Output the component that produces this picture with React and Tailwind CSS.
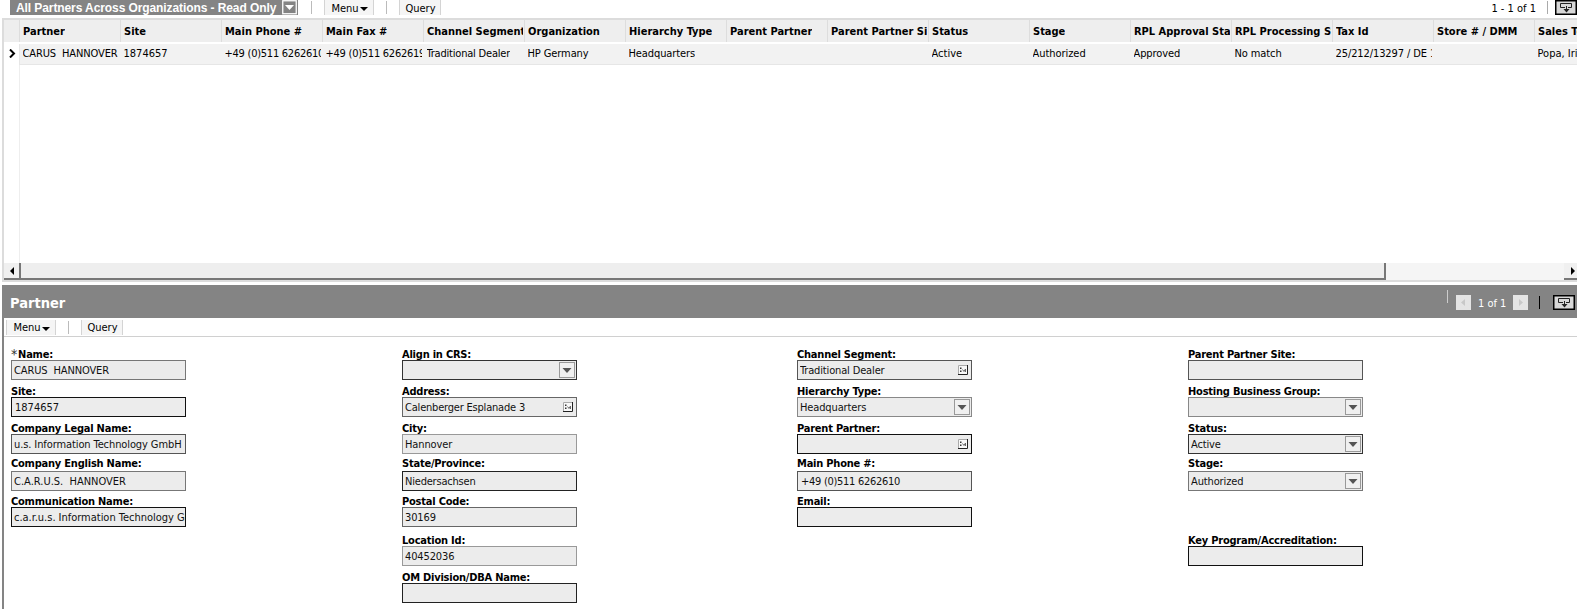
import React from "react";

const COLUMNS = [
  ["Partner", "CARUS  HANNOVER", "tracking-[-0.12px]"],
  ["Site", "1874657", ""],
  ["Main Phone #", "+49 (0)511 6262610", "tracking-[-0.25px]"],
  ["Main Fax #", "+49 (0)511 6262619", "tracking-[-0.25px]"],
  ["Channel Segment", "Traditional Dealer", "tracking-[-0.2px]"],
  ["Organization", "HP Germany", "tracking-[-0.1px]"],
  ["Hierarchy Type", "Headquarters", "tracking-[-0.1px]"],
  ["Parent Partner", "", ""],
  ["Parent Partner Site", "", ""],
  ["Status", "Active", ""],
  ["Stage", "Authorized", "tracking-[-0.05px]"],
  ["RPL Approval Status", "Approved", "tracking-[-0.1px]"],
  ["RPL Processing Status", "No match", "tracking-[-0.1px]"],
  ["Tax Id", "25/212/13297 / DE 1", "tracking-[-0.1px]"],
  ["Store # / DMM", "", ""],
  ["Sales Team", "Popa, Irina", ""],
];

const FIELD_COLUMNS = [
  [
    { label: "Name:", value: "CARUS  HANNOVER", border: "border-[#777]", required: true },
    { label: "Site:", value: "1874657", border: "border-[#111]", pad: "pl-[3px]", tracking: "" },
    { label: "Company Legal Name:", value: "u.s. Information Technology GmbH", border: "border-[#555]", tracking: "tracking-[-0.1px]" },
    { label: "Company English Name:", value: "C.A.R.U.S.  HANNOVER", border: "border-[#777]", raised: true, tracking: "" },
    { label: "Communication Name:", value: "c.a.r.u.s. Information Technology GmbH", border: "border-[#111]", tracking: "tracking-[-0.02px]" },
  ],
  [
    { label: "Align in CRS:", value: "", border: "border-[#333]", kind: "select" },
    { label: "Address:", value: "Calenberger Esplanade 3", border: "border-[#666]", kind: "pick", tracking: "tracking-[-0.2px]" },
    { label: "City:", value: "Hannover", border: "border-[#999]" },
    { label: "State/Province:", value: "Niedersachsen", border: "border-[#222]", tracking: "tracking-[-0.2px]", raised: true },
    { label: "Postal Code:", value: "30169", border: "border-[#666]" },
    { label: "Location Id:", value: "40452036", border: "border-[#999]" },
    { label: "OM Division/DBA Name:", value: "", border: "border-[#222]" },
  ],
  [
    { label: "Channel Segment:", value: "Traditional Dealer", border: "border-[#555]", kind: "pick", tracking: "tracking-[-0.15px]" },
    { label: "Hierarchy Type:", value: "Headquarters", border: "border-[#888]", kind: "select" },
    { label: "Parent Partner:", value: "", border: "border-[#111]", kind: "pick" },
    { label: "Main Phone #:", value: "+49 (0)511 6262610", border: "border-[#555]", pad: "pl-[3px]", tracking: "tracking-[-0.28px]", raised: true },
    { label: "Email:", value: "", border: "border-[#111]" },
  ],
  [
    { label: "Parent Partner Site:", value: "", border: "border-[#555]" },
    { label: "Hosting Business Group:", value: "", border: "border-[#888]", kind: "select" },
    { label: "Status:", value: "Active", border: "border-[#333]", kind: "select" },
    { label: "Stage:", value: "Authorized", border: "border-[#777]", kind: "select", raised: true },
    null,
    { label: "Key Program/Accreditation:", value: "", border: "border-[#111]" },
  ],
];

function ToolButton({ children, className = "" }) {
  return (
    <div className={`flex shrink-0 items-center justify-center border-x border-[#d4d4d4] bg-[#f5f5f5] pl-[1px] pt-[2px] ${className}`}>
      {children}
    </div>
  );
}

function Caret() {
  return (
    <svg width="8" height="4" viewBox="0 0 8 4" className="ml-[1px] mt-[1px]">
      <path d="M0 0H8L4 4Z" fill="#000" />
    </svg>
  );
}

function ExpandIcon() {
  return (
    <svg width="22" height="15" viewBox="0 0 22 15" className="shrink-0">
      <rect x="0.75" y="0.75" width="20.5" height="13.5" fill="#d8d8d8" stroke="#000" strokeWidth="1.5" />
      <path d="M10 7.5H5.5V3.5H16.5V7.5H13M11.5 6V11" fill="none" stroke="#222" />
      <path d="M8.5 9H14.5L11.5 12.5Z" fill="#222" />
    </svg>
  );
}

function SelectButton() {
  return (
    <div className="mr-[1px] flex h-4 w-4 shrink-0 items-center justify-center border border-[#999] bg-[#f0f0f0]">
      <svg width="10" height="5" viewBox="0 0 10 5">
        <path d="M0.5 0H9.5L5 5Z" fill="#555" />
      </svg>
    </div>
  );
}

function PickIcon() {
  return (
    <svg width="10" height="10" viewBox="0 0 10 10" className="mr-[3px] shrink-0">
      <rect x="0" y="0" width="10" height="10" fill="#f8f8f8" />
      <path d="M0.5 9V0.5H9" fill="none" stroke="#aaa" />
      <path d="M0 9.5H9.5V0" fill="none" stroke="#222" />
      <path d="M2 2.5H3.5V4H2ZM2 5.5H3.5V7H2Z" fill="#333" />
      <path d="M4.5 4.5L6 6.5L7.5 4V7" fill="none" stroke="#666" />
    </svg>
  );
}

function PageButton({ flip }) {
  return (
    <svg width="15" height="15" viewBox="0 0 15 15" className="shrink-0">
      <rect width="15" height="15" fill="#e4e4e4" />
      <path d={flip ? "M6 4L10 7.5L6 11Z" : "M9 4L5 7.5L9 11Z"} fill="#c8c8c8" />
    </svg>
  );
}

function Field({ field }) {
  if (!field) return <div />;
  const { label, value, border, required, raised, kind, pad = "pl-[2px]", tracking = "tracking-[-0.13px]" } = field;
  return (
    <div className="flex flex-col">
      <div className={`flex h-[17px] shrink-0 items-end whitespace-nowrap font-bold leading-[11px] tracking-[-0.22px] ${raised ? "pb-[2px]" : ""}`}>
        {required && <span className="mr-[1px] text-[14px] font-normal text-[#333]">*</span>}
        {label}
      </div>
      <div className={`flex h-5 w-[175px] shrink-0 items-center border bg-[#ececec] ${border} ${pad}`}>
        <span className={`min-w-0 flex-1 overflow-hidden whitespace-pre pt-[2px] text-[#111] ${tracking}`}>{value}</span>
        {kind === "select" && <SelectButton />}
        {kind === "pick" && <PickIcon />}
      </div>
    </div>
  );
}

export default function App() {
  return (
    <div className="flex h-[609px] w-[1577px] flex-col overflow-hidden bg-white font-['DejaVu_Sans_Condensed','DejaVu_Sans',sans-serif] text-[11px] leading-[14px] text-black [font-stretch:condensed]">
      <div className="flex h-[18px] items-start">
        <div className="ml-[10px] flex h-[15px] w-[288px] shrink-0 items-center justify-between whitespace-nowrap bg-[#848484] pl-[6px] font-['Liberation_Sans',Arial,sans-serif] text-[12px] font-bold tracking-[-0.09px] text-white">
          <span>All Partners Across Organizations - Read Only</span>
          <svg width="16" height="15" viewBox="0 0 16 15" className="shrink-0">
            <rect x="0.75" y="0.75" width="13.5" height="13" fill="none" stroke="#fff" strokeWidth="1.3" />
            <path d="M3 5H12L7.5 10Z" fill="#fff" />
          </svg>
        </div>
        <div className="ml-[13px] mt-[1px] h-[13px] w-px bg-[#bbb]" />
        <ToolButton className="ml-[12px] h-[15px] w-[50px]">Menu<Caret /></ToolButton>
        <div className="ml-[12px] mt-[1px] h-[13px] w-px bg-[#bbb]" />
        <ToolButton className="ml-[12px] h-[15px] w-[42px]">Query</ToolButton>
        <div className="ml-auto mt-[2px]">1 - 1 of 1</div>
        <div className="ml-[11px] mt-[1px] h-[13px] w-px bg-[#aaa]" />
        <div className="ml-[7px]"><ExpandIcon /></div>
      </div>

      <div className="ml-[2px] flex h-[264px] flex-col border-b-2 border-l-2 border-t-2 border-[#dcdcdc]">
        <div className="flex h-[22px] w-[1700px] bg-[#eee]">
          <div className="h-full w-4 shrink-0 border-r border-[#ddd]" />
          {COLUMNS.map(([head]) => (
            <div key={head} className="flex w-[101px] shrink-0 items-center border-r border-[#ddd] pl-[3px] pr-[1px] pt-[2px] font-bold">
              <span className="overflow-hidden whitespace-nowrap">{head}</span>
            </div>
          ))}
        </div>
        <div className="h-[2px] shrink-0" />
        <div className="flex h-[21px] w-[1700px] shrink-0">
          <div className="flex w-4 shrink-0 items-center justify-center border-r border-[#e6e6e6] pb-[2px] pl-[1px]">
            <svg width="7" height="9" viewBox="0 0 7 9">
              <path d="M1 0.5L5 4.5L1 8.5" fill="none" stroke="#000" strokeWidth="2" />
            </svg>
          </div>
          {COLUMNS.map(([head, value, tracking]) => (
            <div key={head} className="flex w-[101px] shrink-0 items-center border-b border-[#e6e6e6] bg-[#f2f2f2] pb-[1px] pl-[2.5px] pr-[2.5px]">
              <span className={`overflow-hidden whitespace-pre ${tracking}`}>{value}</span>
            </div>
          ))}
        </div>
        <div className="w-4 flex-1 border-r border-[#eee]" />
        <div className="flex h-[17px] shrink-0 bg-[#f5f5f5]">
          <div className="flex w-[17px] items-center justify-center border-b-2 border-r-2 border-[#777] bg-[#f0f0f0]">
            <svg width="4" height="8" viewBox="0 0 4 8"><path d="M4 0V8L0 4Z" fill="#000" /></svg>
          </div>
          <div className="w-[1365px] border-b-2 border-r-2 border-[#777] bg-[#eee]" />
          <div className="ml-auto flex w-[13px] items-center justify-end border-b-2 border-[#777] bg-[#f0f0f0] pr-[2px]">
            <svg width="4" height="8" viewBox="0 0 4 8"><path d="M0 0V8L4 4Z" fill="#000" /></svg>
          </div>
        </div>
      </div>

      <div className="ml-[2px] mt-[3px] flex flex-1 flex-col border-l-2 border-[#848484]">
        <div className="flex h-[33px] shrink-0 items-center bg-[#848484] text-white">
          <div className="ml-[6px] mt-[2px] text-[14.5px] font-bold">Partner</div>
          <div className="ml-auto mb-[10px] h-[13px] w-px bg-[#ccc]" />
          <div className="ml-[8px] mt-[2px] flex items-center">
            <PageButton />
            <span className="mx-[7px] w-[28px] whitespace-nowrap pt-[2px]">1 of 1</span>
            <PageButton flip />
            <div className="ml-[11px] h-[13px] w-px bg-black" />
            <div className="ml-[13px] mr-[2px]"><ExpandIcon /></div>
          </div>
        </div>
        <div className="flex h-[19px] shrink-0 items-center border-b border-[#d0d0d0]">
          <ToolButton className="ml-[2px] h-[15px] w-[50px]">Menu<Caret /></ToolButton>
          <div className="ml-[12px] h-[13px] w-px bg-[#bbb]" />
          <ToolButton className="ml-[12px] h-[15px] w-[42px]">Query</ToolButton>
        </div>
        <div className="mt-[6px] flex">
          {FIELD_COLUMNS.map((fields, i) => (
            <div
              key={i}
              className={`grid shrink-0 grid-rows-[37px_37px_37px_36px_39px_37px_37px] content-start pl-[7px] ${i === 0 ? "w-[391px]" : i === 1 ? "w-[395px]" : i === 2 ? "w-[391px]" : "w-[200px]"}`}
            >
              {fields.map((field, j) => (
                <Field key={j} field={field} />
              ))}
            </div>
          ))}
        </div>
      </div>
    </div>
  );
}
